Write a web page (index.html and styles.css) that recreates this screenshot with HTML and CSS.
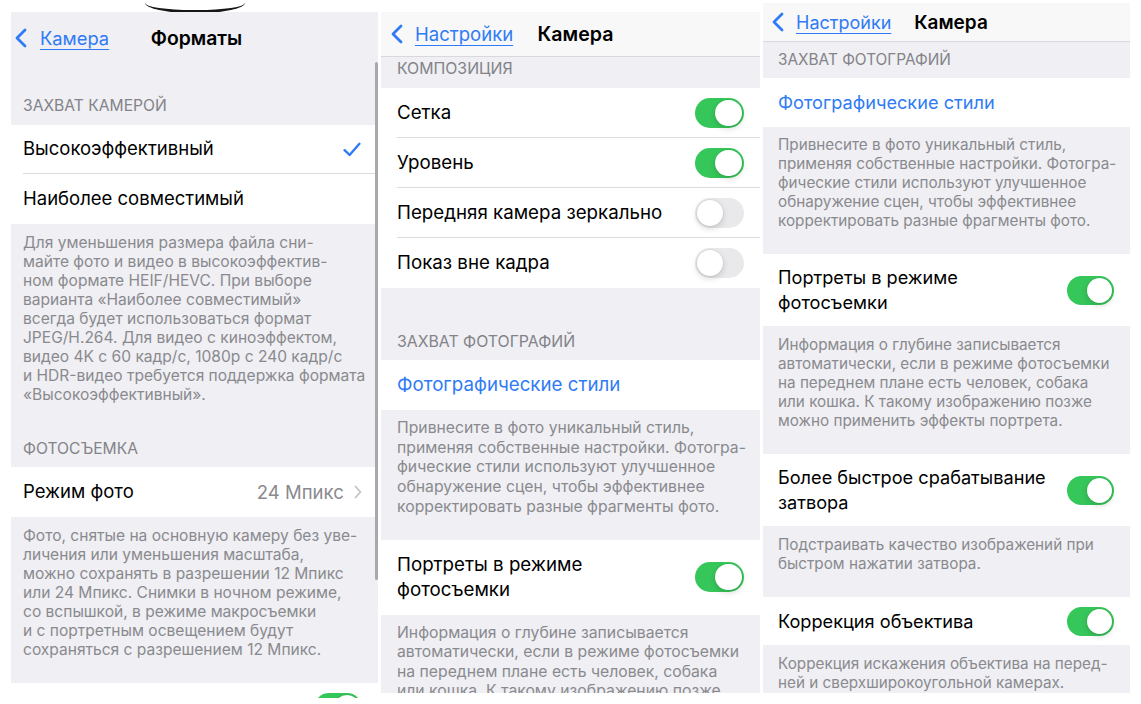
FILE: index.html
```html
<!DOCTYPE html>
<html lang="ru">
<head>
<meta charset="utf-8">
<title>Камера — настройки</title>
<link rel="stylesheet" href="styles.css">
</head>
<body>
<div class="screens">
  <div class="island"></div>

  <!-- Экран «Форматы» -->
  <section class="panel panel-formats">
    <header class="nav">
      <a class="back">
        <svg class="back-chevron" viewBox="0 0 12 20"><path d="M10 2 L2 10 L10 18"/></svg>
        <span class="back-label">Камера</span>
      </a>
      <h1 class="title">Форматы</h1>
    </header>

    <h2 class="group-title gt-first">Захват камерой</h2>
    <ul class="group">
      <li class="row"><div class="row-body"><span class="label">Высокоэффективный</span>
        <svg class="check" viewBox="0 0 18 15"><path d="M1.6 8.2 L6.6 13 L16.4 1.8"/></svg></div></li>
      <li class="row"><div class="row-body"><span class="label">Наиболее совместимый</span></div></li>
    </ul>
    <p class="note">Для уменьшения размера файла сни-<br>майте фото и видео в высокоэффектив-<br>ном формате HEIF/HEVC. При выборе<br>варианта «Наиболее совместимый»<br>всегда будет использоваться формат<br>JPEG/H.264. Для видео с киноэффектом,<br>видео 4K с 60 кадр/с, 1080p с 240 кадр/с<br>и HDR-видео требуется поддержка формата<br>«Высокоэффективный».</p>

    <h2 class="group-title">Фотосъемка</h2>
    <ul class="group">
      <li class="row"><div class="row-body"><span class="label">Режим фото</span>
        <span class="value">24 Мпикс<svg class="disclosure" viewBox="0 0 8 14"><path d="M1.5 1.5 L6.5 7 L1.5 12.5"/></svg></span></div></li>
    </ul>
    <p class="note">Фото, снятые на основную камеру без уве-<br>личения или уменьшения масштаба,<br>можно сохранять в разрешении 12 Мпикс<br>или 24 Мпикс. Снимки в ночном режиме,<br>со вспышкой, в режиме макросъемки<br>и с портретным освещением будут<br>сохраняться с разрешением 12 Мпикс.</p>

    <ul class="group">
      <li class="row"><div class="row-body row-end"><span class="toggle on"></span></div></li>
    </ul>

    <div class="scroll-indicator"></div>
  </section>

  <!-- Экран «Камера», верх списка -->
  <section class="panel panel-camera">
    <header class="nav nav-bar">
      <a class="back">
        <svg class="back-chevron" viewBox="0 0 12 20"><path d="M10 2 L2 10 L10 18"/></svg>
        <span class="back-label">Настройки</span>
      </a>
      <h1 class="title">Камера</h1>
    </header>

    <h2 class="group-title gt-scrolled">Композиция</h2>
    <ul class="group">
      <li class="row"><div class="row-body"><span class="label">Сетка</span><span class="toggle on"></span></div></li>
      <li class="row"><div class="row-body"><span class="label">Уровень</span><span class="toggle on"></span></div></li>
      <li class="row"><div class="row-body"><span class="label">Передняя камера зеркально</span><span class="toggle"></span></div></li>
      <li class="row"><div class="row-body"><span class="label">Показ вне кадра</span><span class="toggle"></span></div></li>
    </ul>

    <h2 class="group-title gt-gap">Захват фотографий</h2>
    <ul class="group">
      <li class="row"><div class="row-body"><span class="label link">Фотографические стили</span></div></li>
    </ul>
    <p class="note">Привнесите в фото уникальный стиль,<br>применяя собственные настройки. Фотогра-<br>фические стили используют улучшенное<br>обнаружение сцен, чтобы эффективнее<br>корректировать разные фрагменты фото.</p>

    <ul class="group">
      <li class="row row-tall"><div class="row-body"><span class="label">Портреты в режиме<br>фотосъемки</span><span class="toggle on"></span></div></li>
    </ul>
    <p class="note">Информация о глубине записывается<br>автоматически, если в режиме фотосъемки<br>на переднем плане есть человек, собака<br>или кошка. К такому изображению позже<br>можно применить эффекты портрета.</p>
  </section>

  <!-- Экран «Камера», прокручен ниже -->
  <section class="panel panel-photo">
    <header class="nav nav-bar">
      <a class="back">
        <svg class="back-chevron" viewBox="0 0 12 20"><path d="M10 2 L2 10 L10 18"/></svg>
        <span class="back-label">Настройки</span>
      </a>
      <h1 class="title">Камера</h1>
    </header>

    <h2 class="group-title gt-top">Захват фотографий</h2>
    <ul class="group">
      <li class="row"><div class="row-body"><span class="label link">Фотографические стили</span></div></li>
    </ul>
    <p class="note">Привнесите в фото уникальный стиль,<br>применяя собственные настройки. Фотогра-<br>фические стили используют улучшенное<br>обнаружение сцен, чтобы эффективнее<br>корректировать разные фрагменты фото.</p>

    <ul class="group">
      <li class="row row-tall"><div class="row-body"><span class="label">Портреты в режиме<br>фотосъемки</span><span class="toggle on"></span></div></li>
    </ul>
    <p class="note">Информация о глубине записывается<br>автоматически, если в режиме фотосъемки<br>на переднем плане есть человек, собака<br>или кошка. К такому изображению позже<br>можно применить эффекты портрета.</p>

    <ul class="group">
      <li class="row row-tall"><div class="row-body"><span class="label">Более быстрое срабатывание<br>затвора</span><span class="toggle on"></span></div></li>
    </ul>
    <p class="note">Подстраивать качество изображений при<br>быстром нажатии затвора.</p>

    <ul class="group">
      <li class="row"><div class="row-body"><span class="label">Коррекция объектива</span><span class="toggle on"></span></div></li>
    </ul>
    <p class="note">Коррекция искажения объектива на перед-<br>ней и сверхширокоугольной камерах.</p>
  </section>
</div>
</body>
</html>
```

FILE: styles.css
```css
* {
  box-sizing: border-box;
  margin: 0;
  padding: 0;
}

html,
body {
  background: #fff;
}

body {
  font-family: "Inter", "Noto Sans", "DejaVu Sans", sans-serif;
  color: #000;
}

/* three phone screens side by side */
.screens {
  position: relative;
  display: flex;
  align-items: flex-start;
  gap: 3px;
  padding-left: 11px;
  height: 704px;
  overflow: hidden;
}

/* lower rim of the camera cut-out above the first screen */
.island {
  position: absolute;
  left: 145px;
  top: 1px;
  width: 100px;
  height: 12px;
  border-bottom: 3.5px solid #161616;
  border-radius: 0 0 48px 48px / 0 0 10px 10px;
}

.panel {
  position: relative;
  background: #efeff4;
  overflow: hidden;
  font-size: 16px;
  --inset: 15px;
  --blue: #2f7bf5;
}

.panel-formats {
  width: 367px;
  height: 686px;
  margin-top: 12px;
  font-size: 16.3px;
  --inset: 12px;
}

.panel-camera {
  width: 379px;
  height: 681px;
  margin-top: 12px;
  font-size: 16.5px;
  --inset: 16px;
}

.panel-photo {
  width: 367px;
  height: 690px;
  margin-top: 3px;
  --inset: 15px;
}

/* navigation bar */
.nav {
  display: grid;
  grid-template-columns: 1fr auto 1fr;
  align-items: center;
}

.nav-bar {
  background: #f8f8f9;
  border-bottom: 1px solid #d9d9dd;
}

.panel-formats .nav {
  height: 52px;
  padding-left: 4px;
}

.panel-camera .nav {
  height: 45px;
  padding-left: 10px;
}

.panel-photo .nav {
  height: 39px;
  padding-left: 9px;
}

.back {
  display: flex;
  align-items: center;
  gap: 12px;
  color: var(--blue);
  justify-self: start;
}

.panel-formats .back {
  gap: 13px;
}

.back-chevron {
  width: 12px;
  height: 20px;
  fill: none;
  stroke: var(--blue);
  stroke-width: 2.8;
  stroke-linecap: round;
  stroke-linejoin: round;
}

.back-label {
  font-size: 1.125em;
  text-decoration: underline;
  text-decoration-thickness: 1px;
  text-underline-offset: 4px;
}

.title {
  font-size: 1.1875em;
  font-weight: 600;
}

/* section headers */
.group-title {
  font-size: 0.96em;
  font-weight: 400;
  line-height: 1.18;
  color: #838388;
  text-transform: uppercase;
  padding: 0.75em var(--inset) 0.59em;
}

.gt-first {
  padding-top: 2.1em;
  padding-bottom: 0.62em;
}

.gt-scrolled {
  padding-top: 0.2em;
  padding-bottom: 0.59em;
}

.gt-gap {
  padding-top: 2.85em;
  padding-bottom: 0.52em;
}

.gt-top {
  padding-top: 0.59em;
  padding-bottom: 0.59em;
}

/* grouped cells */
.group {
  list-style: none;
  background: #fff;
}

.row {
  padding-left: var(--inset);
}

.row-body {
  display: flex;
  align-items: center;
  justify-content: space-between;
  gap: 12px;
  min-height: 3.03em;
  padding-right: 1em;
  border-bottom: 1px solid #dcdce0;
}

.row:last-child .row-body {
  border-bottom: 0;
}

.row-tall .row-body {
  min-height: 4.5em;
  padding-top: 0.6875em;
  padding-bottom: 0.6875em;
}

.row-end {
  justify-content: flex-end;
}

.label {
  font-size: 1.135em;
  line-height: 1.38;
}

.label.link {
  color: var(--blue);
}

.value {
  display: flex;
  align-items: center;
  gap: 10px;
  font-size: 1.135em;
  color: #8a8a8e;
}

.disclosure {
  width: 8px;
  height: 14px;
  fill: none;
  stroke: #c4c4c8;
  stroke-width: 1.8;
  stroke-linecap: round;
  stroke-linejoin: round;
}

.check {
  width: 18px;
  height: 15px;
  margin-right: 1px;
  fill: none;
  stroke: var(--blue);
  stroke-width: 2.4;
  stroke-linecap: round;
  stroke-linejoin: round;
}

/* section footers */
.note {
  font-size: 0.955em;
  line-height: 1.242;
  color: #8a8a8e;
  white-space: nowrap;
  padding: 0.62em var(--inset) 1.53em;
}

.panel-formats .note {
  line-height: 1.22;
}

.panel-camera .note {
  padding-top: 0.52em;
}

/* switches */
.toggle {
  flex: none;
  display: flex;
  justify-content: flex-start;
  align-items: center;
  width: 2.95em;
  height: 1.82em;
  padding: 0 0.12em;
  border-radius: 1em;
  background: #e9e9eb;
}

.toggle::after {
  content: "";
  width: 1.58em;
  height: 1.58em;
  border-radius: 50%;
  background: #fff;
  box-shadow: 0 0.15em 0.4em rgba(0, 0, 0, 0.16), 0 0 0 0.04em rgba(0, 0, 0, 0.05);
}

.toggle.on {
  justify-content: flex-end;
  background: #36c75a;
}

/* scroll position indicator of the first screen */
.scroll-indicator {
  position: absolute;
  right: 0;
  top: 50px;
  width: 3px;
  height: 518px;
  border-radius: 2px;
  background: #a9a9ac;
}
```
